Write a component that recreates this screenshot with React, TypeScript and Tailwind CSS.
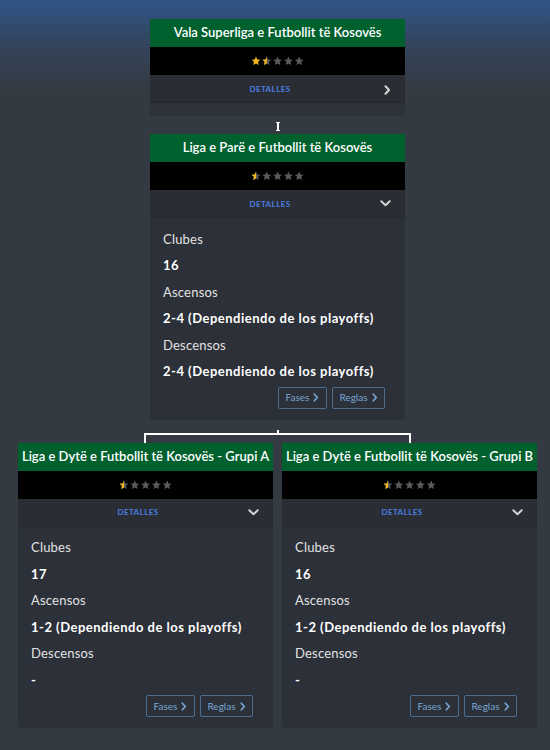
import React from "react";

const FONT = { fontFamily: "Lato, 'Open Sans', sans-serif" };

function Stars({ value }: { value: number }) {
  const star =
    "M5 0.6 L6.3 3.4 L9.4 3.7 L7.1 5.8 L7.7 8.9 L5 7.4 L2.3 8.9 L2.9 5.8 L0.6 3.7 L3.7 3.4 Z";
  return (
    <svg width="54" height="10" viewBox="0 0 54 10">
      <defs>
        <clipPath id="halfclip">
          <rect x="0" y="0" width="5" height="10" />
        </clipPath>
      </defs>
      {[0, 1, 2, 3, 4].map((i) => {
        const full = value >= i + 1;
        const half = !full && value >= i + 0.5;
        return (
          <g key={i} transform={`translate(${i * 10.8},0)`}>
            <path d={star} fill={full ? "#f2b81f" : "#5a5a5a"} />
            {half && <path d={star} fill="#f2b81f" clipPath="url(#halfclip)" />}
          </g>
        );
      })}
    </svg>
  );
}

function ChevronRight({ className }: { className?: string }) {
  return (
    <svg width="7" height="10" viewBox="0 0 7 10" className={className}>
      <path d="M1.5 1.2 L5 5 L1.5 8.8" fill="none" stroke="currentColor" strokeWidth="2" strokeLinecap="round" strokeLinejoin="round" />
    </svg>
  );
}

function ChevronDown({ className }: { className?: string }) {
  return (
    <svg width="11" height="7" viewBox="0 0 11 7" className={className}>
      <path d="M1.3 1.3 L5.5 5.3 L9.7 1.3" fill="none" stroke="currentColor" strokeWidth="2" strokeLinecap="round" strokeLinejoin="round" />
    </svg>
  );
}

function Btn({ label }: { label: string }) {
  return (
    <div className="flex h-[22px] items-center gap-[4px] rounded-[2px] border border-[#4a6e92] px-[6.5px] text-[10px] text-[#79a6d4]">
      <span>{label}</span>
      <ChevronRight className="h-[9px] w-[6px] text-[#79a6d4]" />
    </div>
  );
}

type Info = { clubs: string; asc: string; desc: string };

function Card({ title, stars, info }: { title: string; stars: number; info?: Info }) {
  return (
    <div className="w-[255px] overflow-hidden rounded-b-[4px] bg-[#2c3038]">
      <div className="flex h-[28px] items-center justify-center bg-[#00612f] text-[13px] font-semibold text-white">
        {title}
      </div>
      <div className="flex h-[28px] items-center justify-center bg-black">
        <Stars value={stars} />
      </div>
      <div className="relative flex h-[28px] items-center justify-center border-b border-[#25282e] bg-[#2a2d34] pr-[15px]">
        <span className="text-[8px] font-bold tracking-[0.4px] text-[#4b7fe0]">DETALLES</span>
        <div className="absolute right-[14px] top-[10px] text-[#d4d4d4]">
          {info ? <ChevronDown /> : <ChevronRight />}
        </div>
      </div>
      {info ? (
        <div className="px-[13px] pb-[11px] pr-[20px] pt-[7.5px]">
          <div className="text-[13px] leading-[26.5px] tracking-[0.2px] text-[#e2e2e2]">Clubes</div>
          <div className="text-[13px] font-bold leading-[26.5px] tracking-[0.5px] text-white">{info.clubs}</div>
          <div className="text-[13px] leading-[26.5px] tracking-[0.2px] text-[#e2e2e2]">Ascensos</div>
          <div className="text-[13px] font-bold leading-[26.5px] tracking-[0.5px] text-white">{info.asc}</div>
          <div className="text-[13px] leading-[26.5px] tracking-[0.2px] text-[#e2e2e2]">Descensos</div>
          <div className="text-[13px] font-bold leading-[26.5px] tracking-[0.5px] text-white">{info.desc}</div>
          <div className="mt-[2px] flex justify-end gap-[5px]">
            <Btn label="Fases" />
            <Btn label="Reglas" />
          </div>
        </div>
      ) : (
        <div className="h-[13px] bg-[#2e3239]" />
      )}
    </div>
  );
}

export default function App() {
  return (
    <div
      style={FONT}
      className="h-[750px] w-[550px] overflow-hidden bg-[linear-gradient(to_bottom,#2f5587_0px,#33445c_45px,#343a42_90px,#343a42_100%)] pl-[18px] pt-[19px]"
    >
      <div className="flex w-[519px] flex-col items-center">
        <Card title="Vala Superliga e Futbollit të Kosovës" stars={1.5} />
        <div className="flex h-[18px] flex-col items-center justify-center pt-[2px]">
          <div className="h-[1px] w-[4px] bg-white" />
          <div className="h-[7px] w-[2px] bg-white" />
          <div className="h-[1px] w-[4px] bg-white" />
        </div>
        <Card
          title="Liga e Parë e Futbollit të Kosovës"
          stars={0.5}
          info={{
            clubs: "16",
            asc: "2-4 (Dependiendo de los playoffs)",
            desc: "2-4 (Dependiendo de los playoffs)",
          }}
        />
        <div className="flex h-[23px] w-full flex-col items-center">
          <div className="h-[10px]" />
          <div className="h-[3px] w-[2px] bg-white" />
          <div className="h-[10px] w-[267px] border-x-2 border-t-2 border-white" />
        </div>
        <div className="flex gap-[9px]">
          <Card
            title="Liga e Dytë e Futbollit të Kosovës - Grupi A"
            stars={0.5}
            info={{ clubs: "17", asc: "1-2 (Dependiendo de los playoffs)", desc: "-" }}
          />
          <Card
            title="Liga e Dytë e Futbollit të Kosovës - Grupi B"
            stars={0.5}
            info={{ clubs: "16", asc: "1-2 (Dependiendo de los playoffs)", desc: "-" }}
          />
        </div>
      </div>
    </div>
  );
}
